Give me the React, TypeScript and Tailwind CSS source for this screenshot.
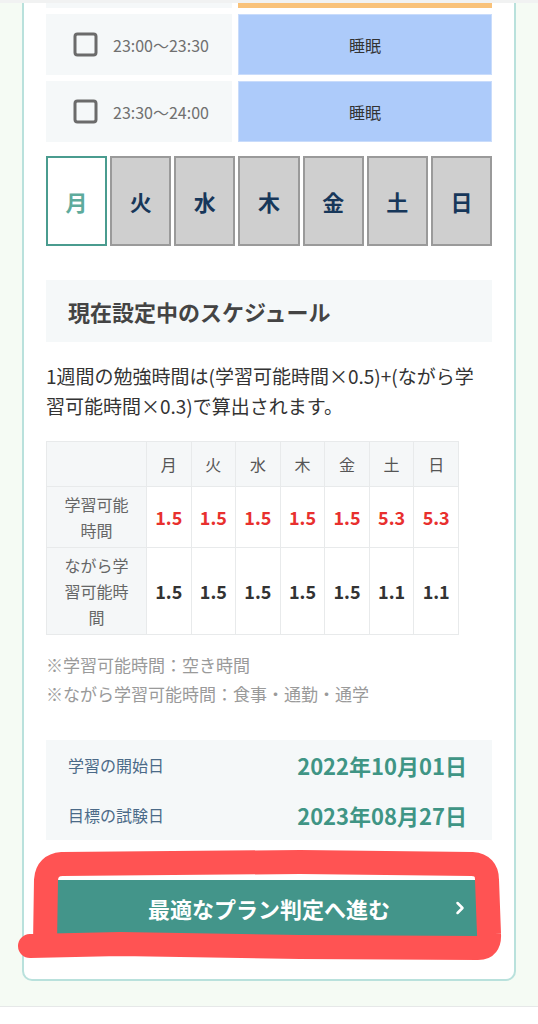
import { ChevronRight } from "lucide-react";

const FONT = { fontFamily: '"Noto Sans CJK JP", "Noto Sans", sans-serif' };

const DAYS = ["月", "火", "水", "木", "金", "土", "日"];
const STUDY = ["1.5", "1.5", "1.5", "1.5", "1.5", "5.3", "5.3"];
const NAGARA = ["1.5", "1.5", "1.5", "1.5", "1.5", "1.1", "1.1"];

function CheckBox() {
  return (
    <svg width="25" height="25" viewBox="0 0 25 25" fill="none">
      <rect x="2" y="2" width="21" height="21" rx="2.5" stroke="#6b6b6b" strokeWidth="3" />
    </svg>
  );
}

function SlotRow({ time }: { time: string }) {
  return (
    <div className="flex h-[61px] gap-[6px]">
      <div className="flex w-[186px] items-center bg-[#f5f8f9] pl-[27px]">
        <CheckBox />
        <span className="ml-[15px] text-[16px] text-[#707070]">{time}</span>
      </div>
      <div className="flex flex-1 items-center justify-center border border-[#c9dcfb] bg-[#adcbfa] text-[16px] text-[#333]">
        睡眠
      </div>
    </div>
  );
}

export default function App() {
  return (
    <div className="relative h-[1024px] w-[538px] overflow-hidden bg-white" style={FONT}>
      <div className="h-[3px] bg-[#f1f2f2]" />
      <div className="bg-[#f5fbf4] px-[22px] pb-[25px] border-b border-[#e6e8e8]">
        <div className="rounded-b-[10px] border-x-2 border-b-2 border-[#b9e1dc] bg-white px-[22px] pb-[43px]">
          {/* time slots */}
          <div className="flex flex-col gap-[6px]">
            <div className="flex h-[5px] gap-[6px]">
              <div className="w-[186px] bg-[#f5f8f9]" />
              <div className="flex-1 bg-[#f9c27a]" />
            </div>
            <SlotRow time="23:00〜23:30" />
            <SlotRow time="23:30〜24:00" />
          </div>

          {/* day tabs */}
          <div className="mt-[14px] grid h-[90px] grid-cols-7 gap-[3px]">
            {DAYS.map((d, i) =>
              i === 0 ? (
                <div
                  key={d}
                  className="flex items-center justify-center border-2 border-[#4a9c8f] bg-white text-[22px] font-bold text-[#5eab9c]"
                >
                  {d}
                </div>
              ) : (
                <div
                  key={d}
                  className="flex items-center justify-center border-2 border-[#9a9a9a] bg-[#cfcfcf] text-[22px] font-bold text-[#17375a]"
                >
                  {d}
                </div>
              )
            )}
          </div>

          {/* heading */}
          <div className="mt-[34px] flex h-[62px] items-center bg-[#f5f8f9] pl-[22px] text-[22px] font-bold text-[#444]">
            現在設定中のスケジュール
          </div>

          <p className="mt-[19px] text-[19px] leading-[30px] text-[#333]">
            1週間の勉強時間は(学習可能時間×0.5)+(ながら学習可能時間×0.3)で算出されます。
          </p>

          {/* table */}
          <table className="mt-[20px] w-[413px] table-fixed border-collapse">
            <colgroup>
              <col className="w-[100px]" />
              {DAYS.map((d) => (
                <col key={d} />
              ))}
            </colgroup>
            <tbody>
              <tr className="h-[45px] bg-[#f5f7f8]">
                <td className="border border-[#e8eaeb]" />
                {DAYS.map((d) => (
                  <td key={d} className="border border-[#e8eaeb] text-center text-[16px] text-[#555]">
                    {d}
                  </td>
                ))}
              </tr>
              <tr>
                <td className="border border-[#e8eaeb] bg-[#f5f7f8] px-[14px] py-[4px] text-center text-[16px] leading-[26px] text-[#666]">
                  学習可能時間
                </td>
                {STUDY.map((v, i) => (
                  <td key={i} className="border border-[#e8eaeb] text-center text-[18px] font-semibold text-[#e8302e]">
                    {v}
                  </td>
                ))}
              </tr>
              <tr>
                <td className="border border-[#e8eaeb] bg-[#f5f7f8] px-[14px] py-[4px] text-center text-[16px] leading-[26px] text-[#666]">
                  ながら学習可能時間
                </td>
                {NAGARA.map((v, i) => (
                  <td key={i} className="border border-[#e8eaeb] text-center text-[18px] font-semibold text-[#333]">
                    {v}
                  </td>
                ))}
              </tr>
            </tbody>
          </table>

          <div className="mt-[15px] text-[17px] leading-[29px] text-[#9a9a9a]">
            <p>※学習可能時間：空き時間</p>
            <p>※ながら学習可能時間：食事・通勤・通学</p>
          </div>

          {/* dates */}
          <div className="mt-[32px] flex flex-col bg-[#f5f8f9] pl-[22px] pr-[25px]">
            <div className="flex h-[50px] items-center justify-between">
              <span className="text-[16px] text-[#4b6a88]">学習の開始日</span>
              <span className="text-[22px] font-bold text-[#3f9585]">2022年10月01日</span>
            </div>
            <div className="flex h-[50px] items-center justify-between">
              <span className="text-[16px] text-[#4b6a88]">目標の試験日</span>
              <span className="text-[22px] font-bold text-[#3f9585]">2023年08月27日</span>
            </div>
          </div>

          {/* button */}
          <button className="relative mt-[40px] flex h-[56px] w-full items-center justify-center bg-[#43958a] text-[22px] font-bold text-white">
            最適なプラン判定へ進む
            <ChevronRight className="absolute right-[22px]" size={20} strokeWidth={3} />
          </button>
        </div>
      </div>

      {/* red hand-drawn annotation */}
      <svg
        className="pointer-events-none absolute left-0 top-0"
        width="538"
        height="1024"
        viewBox="0 0 538 1024"
        fill="none"
      >
        <path
          d="M30 946 L120 944 L300 947 L478 948 Q490 948 489 934 L487 880 Q487 865 472 864 L300 862 L62 864 Q47 865 46 880 L45 944"
          stroke="#ff5353"
          strokeWidth="24"
          strokeLinecap="round"
          strokeLinejoin="round"
        />
      </svg>
    </div>
  );
}
